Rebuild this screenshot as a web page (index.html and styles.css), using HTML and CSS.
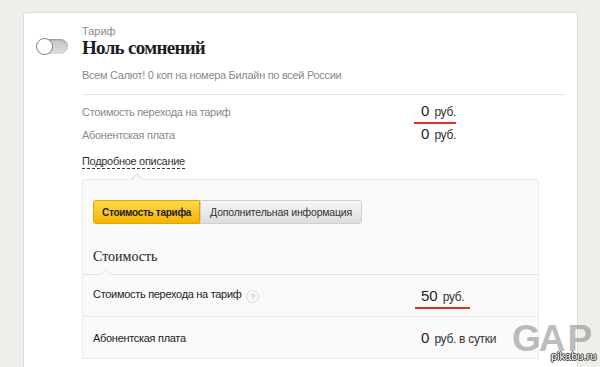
FILE: index.html
```html
<!DOCTYPE html>
<html lang="ru">
<head>
  <meta charset="UTF-8">
  <title>Ноль сомнений</title>
  <link rel="stylesheet" href="styles.css">
</head>
<body>
  <div class="page">
    <div class="tariff-card">
      <div class="toggle-col">
        <span class="toggle"><span class="toggle-knob"></span></span>
      </div>
      <div class="tariff-body">
        <div class="tariff-kind">Тариф</div>
        <h1 class="tariff-name">Ноль сомнений</h1>
        <p class="tariff-desc">Всем Салют! 0 коп на номера Билайн по всей России</p>

        <div class="summary">
          <div class="summary-row">
            <span class="summary-label">Стоимость перехода на тариф</span>
            <span class="price marked"><b>0</b> руб.</span>
          </div>
          <div class="summary-row">
            <span class="summary-label">Абонентская плата</span>
            <span class="price"><b>0</b> руб.</span>
          </div>
        </div>

        <a class="details-link">Подробное описание</a>

        <div class="details-panel">
          <div class="tabs">
            <button class="tab tab-active">Стоимость тарифа</button>
            <button class="tab">Дополнительная информация</button>
          </div>

          <h2 class="section-title">Стоимость</h2>

          <div class="cost-list">
            <div class="cost-row">
              <span class="cost-label">Стоимость перехода на тариф <span class="hint">?</span></span>
              <span class="price marked wide"><b>50</b> руб.</span>
            </div>
            <div class="cost-row">
              <span class="cost-label">Абонентская плата</span>
              <span class="price"><b>0</b> руб. в сутки</span>
            </div>
          </div>
        </div>
      </div>
    </div>
  </div>

  <div class="watermark">GA P</div>
  <div class="site-mark">pikabu.ru</div>
</body>
</html>
```

FILE: styles.css
```css
:root {
  --bg: #efeeeb;
  --card-border: #dedcd8;
  --text: #2b2b2b;
  --text-muted: #8a8a8a;
  --line: #e6e6e6;
  --panel-bg: #fafafa;
  --red: #d9302c;
}

html, body {
  margin: 0;
  height: 100%;
  overflow: hidden;
}

body {
  background-color: var(--bg);
  font-family: "Liberation Sans", Arial, sans-serif;
  color: var(--text);
}

.page {
  padding: 12px 22px 0 23px;
}

.tariff-card {
  display: grid;
  grid-template-columns: 58px 1fr;
  background: #fff;
  border: 1px solid var(--card-border);
  border-bottom: none;
  border-radius: 3px 3px 0 0;
  padding: 12px 11px 8px 0;
}

.toggle-col {
  padding: 14px 0 0 13px;
}

.toggle {
  display: block;
  position: relative;
  width: 31px;
  height: 15px;
  border-radius: 8px;
  background: linear-gradient(#c4c4c4, #dedede);
  box-shadow: inset 0 1px 2px rgba(0, 0, 0, 0.25);
}

.toggle-knob {
  position: absolute;
  left: -1px;
  top: -1px;
  width: 15px;
  height: 15px;
  border-radius: 50%;
  background: #fff;
  border: 1px solid #7d7d7d;
}

.tariff-kind {
  font-size: 11px;
  color: var(--text-muted);
  line-height: 12px;
}

.tariff-name {
  margin: 1px 0 0;
  font-family: "Liberation Serif", serif;
  font-size: 19px;
  font-weight: 700;
  letter-spacing: -0.7px;
  line-height: 20px;
  color: #1d1d1d;
}

.tariff-desc {
  margin: 10px 0 0;
  font-size: 11px;
  letter-spacing: -0.3px;
  color: var(--text-muted);
  line-height: 14px;
}

.summary {
  margin-top: 12px;
  border-top: 1px solid var(--line);
  padding-top: 7px;
}

.summary-row {
  display: grid;
  grid-template-columns: 339px 1fr;
  align-items: baseline;
  height: 23px;
}

.summary-label {
  font-size: 11px;
  letter-spacing: -0.3px;
  color: var(--text-muted);
}

.price {
  font-size: 12px;
  letter-spacing: -0.3px;
  color: #333;
  position: relative;
  justify-self: start;
}

.price b {
  font-family: "Liberation Sans", Arial, sans-serif;
  font-weight: 400;
  font-size: 15px;
  letter-spacing: 0;
  color: #222;
  margin-right: 2px;
}

.price.marked::after {
  content: "";
  position: absolute;
  left: -7px;
  right: 0;
  bottom: -5px;
  height: 2px;
  background: var(--red);
}

.price.wide::after {
  left: -6px;
  right: -6px;
}

.details-link {
  display: inline-block;
  margin-top: 6px;
  font-size: 11px;
  letter-spacing: -0.3px;
  line-height: 14px;
  color: #333;
  border-bottom: 1px dashed #333;
}

.details-panel {
  position: relative;
  margin: 10px 27px 0 0;
  background: var(--panel-bg);
  border: 1px solid #ebebeb;
  border-bottom: none;
  border-radius: 3px 3px 0 0;
  padding-top: 20px;
}

.details-panel::before,
.details-panel::after {
  content: "";
  position: absolute;
  left: 48px;
  border: 6px solid transparent;
  border-top: none;
}

.details-panel::before {
  top: -7px;
  border-bottom: 6px solid #e3e3e3;
}

.details-panel::after {
  top: -5px;
  border-bottom: 6px solid var(--panel-bg);
}

.tabs {
  display: flex;
  padding-left: 10px;
}

.tab {
  height: 24px;
  padding: 0 9px;
  font-family: "Liberation Sans", Arial, sans-serif;
  font-size: 10.5px;
  letter-spacing: -0.2px;
  color: #333;
  border: 1px solid #cfcfcf;
  background: linear-gradient(#f7f7f7, #dcdcdc);
  border-radius: 0 3px 3px 0;
  margin: 0;
}

.tab-active {
  font-size: 10px;
  font-weight: 700;
  letter-spacing: -0.3px;
  color: #222;
  background: linear-gradient(#ffd94e, #f5b400);
  border-color: #e0a600;
  border-radius: 3px 0 0 3px;
  padding: 0 8px;
}

.section-title {
  position: relative;
  margin: 25px 0 0;
  padding: 0 0 9px 10px;
  font-family: "Liberation Serif", serif;
  font-weight: 400;
  font-size: 14px;
  line-height: 16px;
  color: #222;
  border-bottom: 1px solid #e2e2e2;
}

.section-title::before,
.section-title::after {
  content: "";
  position: absolute;
  left: 17px;
  border: 6px solid transparent;
  border-top: none;
}

.section-title::before {
  bottom: -1px;
  border-bottom: 6px solid #e2e2e2;
}

.section-title::after {
  bottom: -2px;
  border-bottom: 6px solid var(--panel-bg);
}

.cost-row {
  display: grid;
  grid-template-columns: 328px 1fr;
  align-items: center;
  height: 41px;
  padding-left: 10px;
  border-bottom: 1px solid #eaeaea;
}

.cost-label {
  font-size: 11px;
  letter-spacing: -0.3px;
  color: #222;
}

.hint {
  display: inline-block;
  width: 11px;
  height: 11px;
  margin-left: 2px;
  border: 1px solid #dcdcdc;
  border-radius: 50%;
  font-size: 8px;
  line-height: 11px;
  letter-spacing: 0;
  text-align: center;
  color: #aaa;
  vertical-align: -1px;
}

.watermark {
  position: absolute;
  left: 512px;
  top: 319px;
  font-family: "Liberation Sans", Arial, sans-serif;
  font-weight: 700;
  font-size: 37px;
  letter-spacing: -2px;
  word-spacing: -3px;
  line-height: 40px;
  color: rgba(130, 130, 130, 0.55);
}

.site-mark {
  position: absolute;
  left: 551px;
  top: 349px;
  font-family: "Liberation Sans", Arial, sans-serif;
  font-size: 11px;
  line-height: 14px;
  color: #fff;
  text-shadow: -1px 0 #333, 1px 0 #333, 0 -1px #333, 0 1px #333;
}
```
